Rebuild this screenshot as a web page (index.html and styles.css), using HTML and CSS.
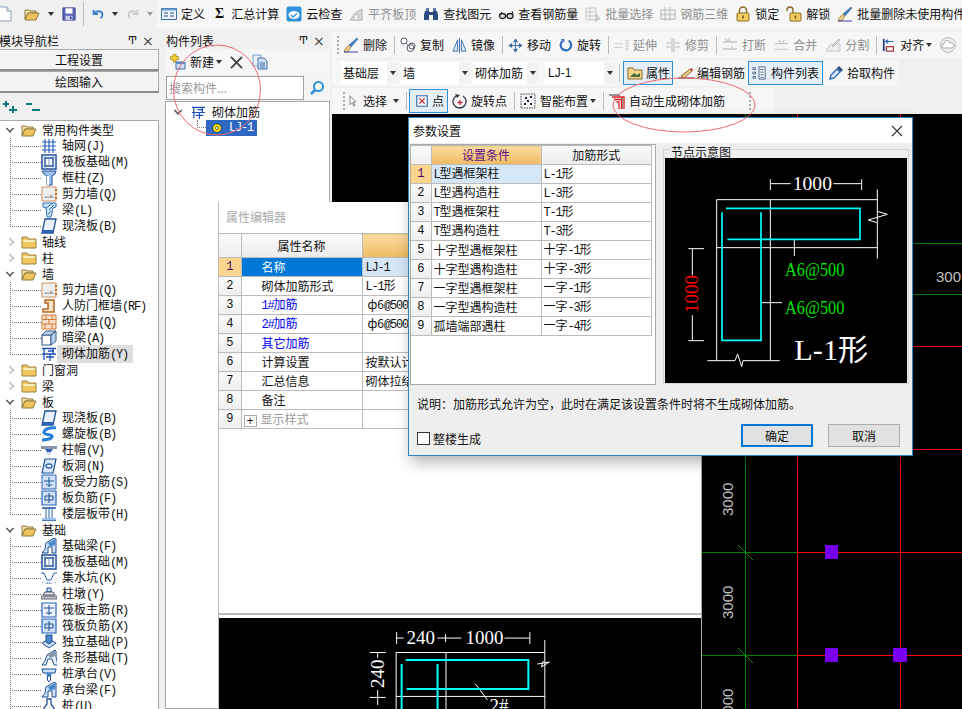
FILE: index.html
```html
<!DOCTYPE html>
<html lang="zh-CN">
<head>
<meta charset="utf-8">
<title>砌体加筋</title>
<link rel="stylesheet" href="styles.css">
</head>
<body>
<svg class="defs" width="0" height="0">
  <symbol id="doc" viewBox="0 0 16 16"><path d="M2 1h8l4 4v10H2z" fill="#fff" stroke="#8aa0b8"/><path d="M10 1v4h4" fill="#dde6f0" stroke="#8aa0b8"/></symbol>
  <symbol id="fopen" viewBox="0 0 16 16"><path d="M1 13V4h4l1 1h6v2H4z" fill="#f5e2a8" stroke="#8f7a3c"/><path d="M1 14l3-7h11l-3 7z" fill="#eec25c" stroke="#8f7a3c"/></symbol>
  <symbol id="fclosed" viewBox="0 0 16 16"><path d="M1 14V3h5l1 2h8v9z" fill="#f0c65e" stroke="#9a8444"/><path d="M2 6h12v2H2z" fill="#fbeab8"/></symbol>
  <symbol id="save" viewBox="0 0 16 16"><path d="M1 1h14v14H1z" fill="#5c62b8" stroke="#3c4488"/><path d="M4 1.500h8v6H4z" fill="#fff"/><path d="M4 10h8v5H4z" fill="#c8cce8"/><path d="M9 11h2v3H9z" fill="#3c4488"/></symbol>
  <symbol id="undo" viewBox="0 0 16 16"><path d="M3 3v5h5M3.500 7.500C6 4 12 4 13 8c.5 2-1 4-2 5" fill="none" stroke="#3f7fc8" stroke-width="2.200"/></symbol>
  <symbol id="redo" viewBox="0 0 16 16"><path d="M13 3v5H8M12.500 7.500C10 4 4 4 3 8c-.5 2 1 4 2 5" fill="none" stroke="#c9cdd0" stroke-width="2.200"/></symbol>
  <symbol id="define" viewBox="0 0 16 16"><path d="M.5 2.500h15v11H.5z" fill="#eef4fb" stroke="#3a6ea8"/><path d="M.5 2.500h15v2H.5z" fill="#6b9bd0"/><path d="M3 7h4M3 10h4M9 7h4M9 10h4" stroke="#234e80"/></symbol>
  <symbol id="cloudchk" viewBox="0 0 16 16"><rect x=".5" y=".5" width="15" height="15" rx="2" fill="#2d93dd"/><ellipse cx="8" cy="9" rx="5.500" ry="4" fill="#fff"/><path d="M5 9l2 2 4-3.500" fill="none" stroke="#2d93dd" stroke-width="1.300"/></symbol>
  <symbol id="alignt" viewBox="0 0 16 16"><path d="M1 14l6-8 7-4v12z" fill="#d5d8d8" stroke="#b0b4b4"/><path d="M5 8h5v6H5z" fill="#eee" stroke="#b8bcbc"/></symbol>
  <symbol id="bino" viewBox="0 0 16 16"><path d="M2 5h4v9H1v-5zM10 5h4l1 4v5h-5zM6 6h4v3H6z" fill="#2a4a80"/><path d="M3 2h3v3H3zM10 2h3v3h-3z" fill="#5c78a8"/></symbol>
  <symbol id="glass" viewBox="0 0 16 16"><path d="M1 9l3-3" stroke="#222" fill="none"/><ellipse cx="4.500" cy="10" rx="3" ry="2.500" fill="#ddd" stroke="#222" stroke-width="1.300"/><ellipse cx="12" cy="10" rx="3" ry="2.500" fill="#ddd" stroke="#222" stroke-width="1.300"/><path d="M7.500 10h1.500M15 8l-1-3" stroke="#222" fill="none"/></symbol>
  <symbol id="batch" viewBox="0 0 16 16"><path d="M1 2h10v12H1zM1 6h10M1 10h10M5 2v12" fill="none" stroke="#c4c8c8"/><path d="M11 8l4 5-3 .5-1 2z" fill="#dcdede" stroke="#b8bcbc"/></symbol>
  <symbol id="steel3d" viewBox="0 0 16 16"><path d="M1 4h14v9H1zM1 8.500h14M5 1v14M10 1v14" fill="none" stroke="#c4c8c8" stroke-width="1.300"/></symbol>
  <symbol id="lock" viewBox="0 0 16 16"><path d="M4.500 7V4.500a3.500 3.500 0 0 1 7 0V7" fill="none" stroke="#8a6c22" stroke-width="1.400"/><rect x="2" y="7" width="12" height="8" rx="1" fill="#f2cc62" stroke="#8a6c22"/><path d="M8 9.500v3" stroke="#6a5218" stroke-width="1.500"/></symbol>
  <symbol id="unlock" viewBox="0 0 16 16"><path d="M1 5V4a3 3 0 0 1 6 0v3" fill="none" stroke="#8a6c22" stroke-width="1.400"/><rect x="4" y="7" width="11" height="8" rx="1" fill="#f2cc62" stroke="#8a6c22"/><path d="M9.500 9.500v3" stroke="#6a5218" stroke-width="1.500"/></symbol>
  <symbol id="brush" viewBox="0 0 16 16"><path d="M14 1l1 1-7 8-2-2z" fill="#3f7fc8" stroke="#234e80" stroke-width=".5"/><path d="M6 8l2 2-3 5-4 0 1-3z" fill="#e8c88a" stroke="#8a6c22" stroke-width=".6"/><path d="M1 15h14" stroke="#3c44a8"/></symbol>
  <symbol id="copyc" viewBox="0 0 16 16"><circle cx="4" cy="4" r="3" fill="#fff" stroke="#556"/><circle cx="10.500" cy="11" r="3.500" fill="#fff" stroke="#556"/><circle cx="12" cy="9" r="3" fill="none" stroke="#556"/><path d="M6 6l2 2" stroke="#556" stroke-dasharray="1 1"/></symbol>
  <symbol id="mirror" viewBox="0 0 16 16"><path d="M6 2L1 14h5zM10 2l5 12h-5z" fill="#dfeaf6" stroke="#3a6ea8"/><path d="M8 0v16" stroke="#3a6ea8"/></symbol>
  <symbol id="move" viewBox="0 0 16 16"><path d="M8 1v14M1 8h14M8 1L6 4h4zM8 15l-2-3h4zM1 8l3-2v4zM15 8l-3-2v4z" fill="#3f6fa8" stroke="#3f6fa8"/></symbol>
  <symbol id="rot" viewBox="0 0 16 16"><path d="M11 3a6 6 0 1 1-7 .5" fill="none" stroke="#2e6cc0" stroke-width="2.500"/><path d="M2 1h4v4z" fill="#2e6cc0"/></symbol>
  <symbol id="ext" viewBox="0 0 16 16"><path d="M1 6h9M1 10h9M13 2v12M15 2v12" stroke="#bbb" fill="none" stroke-dasharray="2 1"/></symbol>
  <symbol id="trim" viewBox="0 0 16 16"><path d="M1 6h5M1 10h5M10 6h5M10 10h5M7 1v14M9 1v14" stroke="#bbb" fill="none"/></symbol>
  <symbol id="brk" viewBox="0 0 16 16"><path d="M1 5h14M1 12h14M7 1v4M10 9v4M3 2l3 2" stroke="#c2c6c6" fill="none" stroke-width="1.300"/></symbol>
  <symbol id="merge" viewBox="0 0 16 16"><path d="M1 6h14M1 12h14M5 2l2 3M11 2L9 5" stroke="#c2c6c6" fill="none" stroke-width="1.300"/></symbol>
  <symbol id="split" viewBox="0 0 16 16"><path d="M1 14l5-7h9v7z" fill="#eee" stroke="#c2c6c6"/><path d="M7 9l7-7 1 1-7 7z" fill="#ddd" stroke="#b8bcbc"/></symbol>
  <symbol id="alignl" viewBox="0 0 16 16"><path d="M2 1v14" stroke="#203c80" stroke-width="2"/><path d="M4 4h9M4 4l3-2M4 4l3 2" stroke="#2a62b8" fill="none" stroke-width="1.300"/><rect x="5" y="10" width="8" height="5" fill="#fff" stroke="#a02030" stroke-width="1.300"/></symbol>
  <symbol id="cloudg" viewBox="0 0 16 16"><circle cx="8" cy="8" r="7.500" fill="#eee" stroke="#bbb"/><path d="M4 11a2 2 0 0 1 0-4 3 3 0 0 1 6-1 2.500 2.500 0 0 1 2 5z" fill="#fff" stroke="#aaa"/></symbol>
  <symbol id="prop" viewBox="0 0 16 16"><path d="M1 3h5l1 2h8v9H1z" fill="#f3d48a" stroke="#8a6c22"/><path d="M3 12l4-4 3 2 3-2v4z" fill="#4a6a3a"/></symbol>
  <symbol id="edit" viewBox="0 0 16 16"><path d="M0 13h16" stroke="#222"/><path d="M3 11l9-7 2 2-8 7z" fill="#f0d080" stroke="#8a6030"/><path d="M12 4l1.500-1 2 2L14 6z" fill="#c04040"/></symbol>
  <symbol id="list" viewBox="0 0 16 16"><path d="M8 1h7v14H8z" fill="#fff" stroke="#3a5a88"/><path d="M9.500 4h4M9.500 7h4M9.500 10h4M9.500 13h4" stroke="#3a5a88"/><path d="M1 2h3v2H1zM1 7h3v2H1zM1 12h3v2H1z" fill="#fff" stroke="#3a5a88"/></symbol>
  <symbol id="pick" viewBox="0 0 16 16"><path d="M2 14l1-4 6-6 3 3-6 6z" fill="#dbe9f8" stroke="#2a62b8" stroke-width="1.300"/><path d="M9 3l2-2 4 4-2 2z" fill="#2a4a80"/></symbol>
  <symbol id="arrow" viewBox="0 0 16 16"><path d="M4 1v12l3-3 2 5 1.500-.8-2-5H12z" fill="#fff" stroke="#667"/></symbol>
  <symbol id="point" viewBox="0 0 16 16"><path d="M2 2h12v12H2z" fill="#eef3fa" stroke="#3a6ea8" stroke-width="1.300"/><path d="M5 5l6 6M11 5l-6 6" stroke="#c02030" stroke-width="1.300"/></symbol>
  <symbol id="rotp" viewBox="0 0 16 16"><path d="M5 2.500a6.500 6.500 0 1 0 6 .5" fill="none" stroke="#334" stroke-width="1.300"/><path d="M3 1l5 1-3 3z" fill="#334"/><path d="M8 7v5M5.500 9.500h5" stroke="#c03040" stroke-width="1.300"/></symbol>
  <symbol id="smart" viewBox="0 0 16 16"><rect x="1" y="1" width="14" height="14" fill="#f4f4f4" stroke="#445" stroke-dasharray="1.500 1"/><path d="M5 4h2v2H5zM10 3h2v2h-2zM4 10h2v2H4zM10 10h2v2h-2zM7 7h2v2H7z" fill="#223"/></symbol>
  <symbol id="auto" viewBox="0 0 16 16"><path d="M0 2h11M13 4v12" stroke="#333" fill="none"/><path d="M3 4h12v12M5 6.500h7.500V16M7.500 9h2.500v7" stroke="#e02020" fill="none" stroke-width="1.300"/></symbol>
  <symbol id="newi" viewBox="0 0 16 16"><path d="M6 8h9v7H6z" fill="#cfe0f4" stroke="#3a6ea8"/><path d="M6 8h9v2H6z" fill="#5f8fc8"/><path d="M3 0h3v2.500h2.500v3H6V8H3V5.500H.5v-3H3z" fill="#f3d030" stroke="#8a7a20" stroke-width=".6"/></symbol>
  <symbol id="copyp" viewBox="0 0 16 16"><path d="M1 1h8v11H1z" fill="#e8f0fa" stroke="#7a9cc8"/><path d="M6 4h6l3 3v8H6z" fill="#cfe0f4" stroke="#3a6ea8"/><path d="M8 9h5M8 11h5M8 13h5" stroke="#3a6ea8"/></symbol>
  <symbol id="search" viewBox="0 0 16 16"><circle cx="9.500" cy="6.500" r="4.500" fill="#fff" stroke="#2e90d8" stroke-width="2"/><path d="M6 10l-4 4" stroke="#2e90d8" stroke-width="2.500"/></symbol>

  <symbol id="t-grid" viewBox="0 0 16 16"><path d="M1 4h14M1 8h14M1 12h14M4 1v14M8 1v14M12 1v14" stroke="#2a62b8" stroke-width="1.200" fill="none"/></symbol>
  <symbol id="t-raft" viewBox="0 0 16 16"><path d="M1 1h14v14H1z" fill="#fff" stroke="#1f4f96" stroke-width="1.500"/><path d="M4 4h8v8H4z" fill="none" stroke="#1f4f96" stroke-width="1.400"/><path d="M1 4h3M12 4h3M1 12h3M12 12h3M4 1v3M12 1v3M4 12v3M12 12v3M8 4v8" stroke="#6f9ad0"/></symbol>
  <symbol id="t-col" viewBox="0 0 16 16"><path d="M1 1h14l-1 3-3 2v9H6V6L3 4z" fill="#9cc0ea" stroke="#1f4f96"/><path d="M6 6h2v9H6z" fill="#fff"/></symbol>
  <symbol id="t-swall" viewBox="0 0 16 16"><path d="M1 1h14v14H1z" fill="#efefef" stroke="#d0905a"/><path d="M3 12l2-2 3 1 2-3 3 4z" fill="#aaa"/><path d="M15 3v2M15 7v2M15 11v2" stroke="#c86a20" stroke-width="2"/></symbol>
  <symbol id="t-beam" viewBox="0 0 16 16"><path d="M2 1h13v4l-3 1-2 9H6L5 6 2 5z" fill="#cfe4f8" stroke="#2a72b8"/><path d="M5 6l7-5M8 8l5-5M7 12l3-3" stroke="#2a72b8" fill="none"/></symbol>
  <symbol id="t-slab" viewBox="0 0 16 16"><path d="M4 1h11l-3 14H1z" fill="#e8f1fb" stroke="#1f4f96" stroke-width="1.300"/><path d="M1 15h11l1-3H2z" fill="#2a62b8"/></symbol>
  <symbol id="t-gate" viewBox="0 0 16 16"><path d="M4 2h9v12H2v-3h5V5H4z" fill="#f6e3c8" stroke="#b5651d" stroke-width="1.500"/></symbol>
  <symbol id="t-brick" viewBox="0 0 16 16"><path d="M1 1h14v14H1z" fill="#fae0c8" stroke="#d07c3c"/><path d="M1 5.500h14M1 10h14M5 1v4.500M11 1v4.500M8 5.500V10M4 10v5M11 10v5" stroke="#d07c3c"/></symbol>
  <symbol id="t-hid" viewBox="0 0 16 16"><path d="M1 5h9v10H1z" fill="#fff" stroke="#3a5a88" stroke-width="1.200"/><path d="M1 5l4-4h10l-5 4zM10 5l5-4v10l-5 4z" fill="#b9d2ee" stroke="#3a5a88"/></symbol>
  <symbol id="t-reb" viewBox="0 0 16 16"><path d="M1 2.500h14M3 2v12M12 2.500V8M1 8h14M7 5h6M9 8v7M5 11h8" stroke="#1f4fb8" stroke-width="1.300" fill="none"/></symbol>
  <symbol id="t-spi" viewBox="0 0 16 16"><path d="M15 2C9 1 4 3 3 6s7 2 8 4-4 4-10 4" fill="none" stroke="#2a80d8" stroke-width="3"/></symbol>
  <symbol id="t-cap" viewBox="0 0 16 16"><path d="M0 4h16v3H0z" fill="#8a96a8"/><path d="M4 7h8l-2 3H6z" fill="#2a62b8"/><path d="M6 10h4v3H6z" fill="#cfd8e4"/></symbol>
  <symbol id="t-hole" viewBox="0 0 16 16"><path d="M4 1h11l-3 14H1z" fill="#dceafa" stroke="#1f4f96" stroke-width="1.200"/><ellipse cx="8" cy="8" rx="3" ry="2" fill="#fff" stroke="#2a62b8" stroke-width="1.300"/></symbol>
  <symbol id="t-force" viewBox="0 0 16 16"><path d="M1 1h14v14H1z" fill="#cfe2f8" stroke="#2a62b8"/><path d="M3 7h10M8 3v10M5 10c2 2 5 2 6 0" stroke="#1f4f96" fill="none"/></symbol>
  <symbol id="t-neg" viewBox="0 0 16 16"><path d="M1 1h14v14H1z" fill="#cfe2f8" stroke="#2a62b8" stroke-width="1.200"/><path d="M4 6h8v4H4zM8 3v10" stroke="#1f4f96" fill="none"/></symbol>
  <symbol id="t-belt" viewBox="0 0 16 16"><path d="M1 2h14M1 14h14" stroke="#1f4f96" stroke-width="1.500"/><path d="M5 2v12M8 2v12M11 2v12" stroke="#2a62b8"/><path d="M1 13h14" stroke="#9cc0ea" stroke-width="2"/></symbol>
  <symbol id="t-fb" viewBox="0 0 16 16"><path d="M1 15l3-4 1-6 8-5 2 1v14h-4V9H7v6z" fill="#cfe4f8" stroke="#1f4f96"/><path d="M7 5l7-4v6l-5 2z" fill="#4a88c8"/></symbol>
  <symbol id="t-pit" viewBox="0 0 16 16"><path d="M0 3h3l3 7h4l3-7h3" fill="none" stroke="#2a62b8"/><path d="M2 9l3 5h6l3-5 -2 4H4z" fill="#9cc0ea"/><path d="M1 12l1 1M6 13h4M14 12l1 1" stroke="#2a62b8" stroke-dasharray="1 1"/></symbol>
  <symbol id="t-pier" viewBox="0 0 16 16"><path d="M6 2h4v4H6z" fill="#cfe0f4" stroke="#1f4f96"/><path d="M4 6h8l2 3H2z" fill="#e8eef6" stroke="#445"/><path d="M0 10h16v3H0z" fill="#b8bec8" stroke="#667"/></symbol>
  <symbol id="t-main" viewBox="0 0 16 16"><path d="M1 1h14v14H1z" fill="#eaf2fb" stroke="#2a62b8" stroke-width="1.200"/><path d="M3 6h10M8 3v10M5 11h6" stroke="#1f4f96" fill="none"/></symbol>
  <symbol id="t-iso" viewBox="0 0 16 16"><path d="M1 9l7-4 7 4-7 5z" fill="#cfe2f8" stroke="#1f4f96"/><path d="M5 1h6v7l-3 2-3-2z" fill="#4a88c8" stroke="#1f4f96"/></symbol>
  <symbol id="t-strip" viewBox="0 0 16 16"><path d="M1 15l3-4 2-6 8-5 1 1v6l2 8h-4l-2-6H7l-2 6z" fill="#e8f1fb" stroke="#1f4f96"/><path d="M7 5l7-4v5l-5 2z" fill="#8a96a8"/></symbol>
  <symbol id="t-cb" viewBox="0 0 16 16"><path d="M1 3h14l-1 4H2z" fill="#cfe2f8" stroke="#1f4f96"/><path d="M5 7h6l-1 3H6z" fill="#4a88c8"/><path d="M6.500 10h3v4l-1.500 2-1.500-2z" fill="#fff" stroke="#1f4f96"/></symbol>
  <symbol id="t-pile" viewBox="0 0 16 16"><path d="M6 1h4v5l3 4v3H3v-3l3-4z" fill="#fff" stroke="#1f4f96" stroke-width="1.300"/><path d="M3 13h10v2H3z" fill="#4a88c8"/></symbol>
  <symbol id="t-gear" viewBox="0 0 16 16"><circle cx="8" cy="8" r="5.500" fill="#ffe800" stroke="#222" stroke-dasharray="2 1"/><circle cx="8" cy="8" r="2" fill="#fff" stroke="#444"/></symbol>
</svg>

<div class="app">
  <header class="topbar">
    <div class="qa">
      <svg class="ic doccut"><use href="#doc"/></svg>
      <svg class="ic ic18"><use href="#fopen"/></svg><span class="caret"></span>
      <svg class="ic ic14"><use href="#save"/></svg>
      <span class="vbar"></span>
      <svg class="ic ic14"><use href="#undo"/></svg><span class="caret"></span>
      <svg class="ic ic14"><use href="#redo"/></svg><span class="caret faint"></span>
    </div>
    <div class="mainbar">
      <div class="ti"><svg class="ic"><use href="#define"/></svg>定义</div>
      <div class="ti sigma"><span class="sig">Σ</span>汇总计算</div>
      <div class="ti"><svg class="ic"><use href="#cloudchk"/></svg>云检查</div>
      <div class="ti off"><svg class="ic ic15"><use href="#alignt"/></svg>平齐板顶</div>
      <div class="ti"><svg class="ic"><use href="#bino"/></svg>查找图元</div>
      <div class="ti"><svg class="ic"><use href="#glass"/></svg>查看钢筋量</div>
      <div class="ti off"><svg class="ic"><use href="#batch"/></svg>批量选择</div>
      <div class="ti off"><svg class="ic"><use href="#steel3d"/></svg>钢筋三维</div>
      <div class="ti"><svg class="ic"><use href="#lock"/></svg>锁定</div>
      <div class="ti"><svg class="ic"><use href="#unlock"/></svg>解锁</div>
      <div class="ti"><svg class="ic"><use href="#brush"/></svg>批量删除未使用构件</div>
    </div>
  </header>

  <div class="main">
    <aside class="nav">
      <div class="panehead navhead"><span class="title cutleft">模块导航栏</span><span class="pin">Ͳ</span><span class="closex">×</span></div>
      <button class="navbtn">工程设置</button>
      <button class="navbtn">绘图输入</button>
      <div class="navtools">
        <svg class="pm" viewBox="0 0 16 12"><path d="M1 3h6M4 0v6M7 9h8M11 5v7" stroke="#0a7a7a" stroke-width="2"/></svg>
        <svg class="pm" viewBox="0 0 16 12"><path d="M1 3h6M7 9h8" stroke="#0a7a7a" stroke-width="2"/></svg>
      </div>
      <div class="tree">
        <div class="node"><span class="tw open"></span><svg class="ic"><use href="#fopen"/></svg><span class="lbl">常用构件类型</span></div>
        <div class="kid"><span class="conn"></span><svg class="ic"><use href="#t-grid"/></svg><span class="lbl">轴网<span class="la">(J)</span></span></div>
        <div class="kid"><span class="conn"></span><svg class="ic"><use href="#t-raft"/></svg><span class="lbl">筏板基础<span class="la">(M)</span></span></div>
        <div class="kid"><span class="conn"></span><svg class="ic"><use href="#t-col"/></svg><span class="lbl">框柱<span class="la">(Z)</span></span></div>
        <div class="kid"><span class="conn"></span><svg class="ic"><use href="#t-swall"/></svg><span class="lbl">剪力墙<span class="la">(Q)</span></span></div>
        <div class="kid"><span class="conn"></span><svg class="ic"><use href="#t-beam"/></svg><span class="lbl">梁<span class="la">(L)</span></span></div>
        <div class="kid"><span class="conn end"></span><svg class="ic"><use href="#t-slab"/></svg><span class="lbl">现浇板<span class="la">(B)</span></span></div>
        <div class="node"><span class="tw"></span><svg class="ic"><use href="#fclosed"/></svg><span class="lbl">轴线</span></div>
        <div class="node"><span class="tw"></span><svg class="ic"><use href="#fclosed"/></svg><span class="lbl">柱</span></div>
        <div class="node"><span class="tw open"></span><svg class="ic"><use href="#fopen"/></svg><span class="lbl">墙</span></div>
        <div class="kid"><span class="conn"></span><svg class="ic"><use href="#t-swall"/></svg><span class="lbl">剪力墙<span class="la">(Q)</span></span></div>
        <div class="kid"><span class="conn"></span><svg class="ic"><use href="#t-gate"/></svg><span class="lbl">人防门框墙<span class="la">(RF)</span></span></div>
        <div class="kid"><span class="conn"></span><svg class="ic"><use href="#t-brick"/></svg><span class="lbl">砌体墙<span class="la">(Q)</span></span></div>
        <div class="kid"><span class="conn"></span><svg class="ic"><use href="#t-hid"/></svg><span class="lbl">暗梁<span class="la">(A)</span></span></div>
        <div class="kid"><span class="conn end"></span><svg class="ic"><use href="#t-reb"/></svg><span class="lbl hot">砌体加筋<span class="la">(Y)</span></span></div>
        <div class="node"><span class="tw"></span><svg class="ic"><use href="#fclosed"/></svg><span class="lbl">门窗洞</span></div>
        <div class="node"><span class="tw"></span><svg class="ic"><use href="#fclosed"/></svg><span class="lbl">梁</span></div>
        <div class="node"><span class="tw open"></span><svg class="ic"><use href="#fopen"/></svg><span class="lbl">板</span></div>
        <div class="kid"><span class="conn"></span><svg class="ic"><use href="#t-slab"/></svg><span class="lbl">现浇板<span class="la">(B)</span></span></div>
        <div class="kid"><span class="conn"></span><svg class="ic"><use href="#t-spi"/></svg><span class="lbl">螺旋板<span class="la">(B)</span></span></div>
        <div class="kid"><span class="conn"></span><svg class="ic"><use href="#t-cap"/></svg><span class="lbl">柱帽<span class="la">(V)</span></span></div>
        <div class="kid"><span class="conn"></span><svg class="ic"><use href="#t-hole"/></svg><span class="lbl">板洞<span class="la">(N)</span></span></div>
        <div class="kid"><span class="conn"></span><svg class="ic"><use href="#t-force"/></svg><span class="lbl">板受力筋<span class="la">(S)</span></span></div>
        <div class="kid"><span class="conn"></span><svg class="ic"><use href="#t-neg"/></svg><span class="lbl">板负筋<span class="la">(F)</span></span></div>
        <div class="kid"><span class="conn end"></span><svg class="ic"><use href="#t-belt"/></svg><span class="lbl">楼层板带<span class="la">(H)</span></span></div>
        <div class="node"><span class="tw open"></span><svg class="ic"><use href="#fopen"/></svg><span class="lbl">基础</span></div>
        <div class="kid"><span class="conn"></span><svg class="ic"><use href="#t-fb"/></svg><span class="lbl">基础梁<span class="la">(F)</span></span></div>
        <div class="kid"><span class="conn"></span><svg class="ic"><use href="#t-raft"/></svg><span class="lbl">筏板基础<span class="la">(M)</span></span></div>
        <div class="kid"><span class="conn"></span><svg class="ic"><use href="#t-pit"/></svg><span class="lbl">集水坑<span class="la">(K)</span></span></div>
        <div class="kid"><span class="conn"></span><svg class="ic"><use href="#t-pier"/></svg><span class="lbl">柱墩<span class="la">(Y)</span></span></div>
        <div class="kid"><span class="conn"></span><svg class="ic"><use href="#t-main"/></svg><span class="lbl">筏板主筋<span class="la">(R)</span></span></div>
        <div class="kid"><span class="conn"></span><svg class="ic"><use href="#t-neg"/></svg><span class="lbl">筏板负筋<span class="la">(X)</span></span></div>
        <div class="kid"><span class="conn"></span><svg class="ic"><use href="#t-iso"/></svg><span class="lbl">独立基础<span class="la">(P)</span></span></div>
        <div class="kid"><span class="conn"></span><svg class="ic"><use href="#t-strip"/></svg><span class="lbl">条形基础<span class="la">(T)</span></span></div>
        <div class="kid"><span class="conn"></span><svg class="ic"><use href="#t-cb"/></svg><span class="lbl">桩承台<span class="la">(V)</span></span></div>
        <div class="kid"><span class="conn"></span><svg class="ic"><use href="#t-fb"/></svg><span class="lbl">承台梁<span class="la">(F)</span></span></div>
        <div class="kid"><span class="conn"></span><svg class="ic"><use href="#t-pile"/></svg><span class="lbl">桩<span class="la">(U)</span></span></div>
      </div>
    </aside>

    <aside class="list">
      <div class="panehead"><span class="title">构件列表</span><span class="pin">Ͳ</span><span class="closex">×</span></div>
      <div class="listtools">
        <svg class="ic"><use href="#newi"/></svg><span class="newtxt">新建</span><span class="caret small"></span>
        <svg class="bigx" viewBox="0 0 14 14"><path d="M1 1l12 12M13 1L1 13" stroke="#444" stroke-width="2"/></svg>
        <svg class="ic"><use href="#copyp"/></svg>
      </div>
      <div class="searchrow">
        <div class="searchbox">搜索构件...</div>
        <div class="searchbtn"><svg class="ic"><use href="#search"/></svg></div>
      </div>
      <div class="listtree">
        <div class="rootnode"><span class="tw open"></span><svg class="ic ic15"><use href="#t-reb"/></svg><span>砌体加筋</span></div>
        <div class="leaf"><span class="leafconn"></span><span class="leafsel"><svg class="ic ic12"><use href="#t-gear"/></svg><span class="leaftxt">LJ-1</span></span></div>
      </div>
    </aside>

    <section class="work">
      <div class="bar bara">
        <span class="grip"></span>
        <div class="ti"><svg class="ic"><use href="#brush"/></svg>删除</div>
        <span class="sep"></span>
        <div class="ti"><svg class="ic"><use href="#copyc"/></svg>复制</div>
        <div class="ti"><svg class="ic ic15"><use href="#mirror"/></svg>镜像</div>
        <span class="sep"></span>
        <div class="ti"><svg class="ic ic15"><use href="#move"/></svg>移动</div>
        <div class="ti"><svg class="ic ic14"><use href="#rot"/></svg>旋转</div>
        <span class="sep"></span>
        <div class="ti off"><svg class="ic ic15"><use href="#ext"/></svg>延伸</div>
        <div class="ti off"><svg class="ic"><use href="#trim"/></svg>修剪</div>
        <span class="sep"></span>
        <div class="ti off"><svg class="ic"><use href="#brk"/></svg>打断</div>
        <div class="ti off"><svg class="ic ic15"><use href="#merge"/></svg>合并</div>
        <div class="ti off"><svg class="ic"><use href="#split"/></svg>分割</div>
        <span class="sep"></span>
        <div class="ti"><svg class="ic ic14"><use href="#alignl"/></svg>对齐<span class="caret small"></span></div>
        <svg class="ic"><use href="#cloudg"/></svg>
      </div>
      <div class="bar barb">
        <div class="sel w57"><span class="seltxt">基础层</span><span class="selbtn"></span></div>
        <div class="sel w69"><span class="seltxt">墙</span><span class="selbtn"></span></div>
        <div class="sel w65"><span class="seltxt">砌体加筋</span><span class="selbtn"></span></div>
        <div class="sel w70"><span class="seltxt lj">LJ-1</span><span class="selbtn"></span></div>
        <span class="sep narrow"></span>
        <div class="ti on propbtn"><svg class="ic"><use href="#prop"/></svg>属性</div>
        <div class="ti"><svg class="ic"><use href="#edit"/></svg>编辑钢筋</div>
        <div class="ti on listbtn"><svg class="ic ic14"><use href="#list"/></svg>构件列表</div>
        <div class="ti"><svg class="ic"><use href="#pick"/></svg>拾取构件</div>
      </div>
      <div class="bar barc">
        <span class="grip"></span>
        <div class="ti wide"><svg class="ic ic12"><use href="#arrow"/></svg>选择<span class="caret"></span></div>
        <span class="sep"></span>
        <div class="ti on ptbtn"><svg class="ic ic14"><use href="#point"/></svg>点</div>
        <div class="ti rotpt"><svg class="ic"><use href="#rotp"/></svg>旋转点</div>
        <span class="sep"></span>
        <div class="ti"><svg class="ic"><use href="#smart"/></svg>智能布置<span class="caret small"></span></div>
        <span class="sep"></span>
        <div class="ti"><svg class="ic"><use href="#auto"/></svg>自动生成砌体加筋</div>
        <span class="grip late"></span>
      </div>
      <div class="canvas">
        <svg class="cad" viewBox="332 114 630 595">
          <g fill="none" stroke-width="1">
            <path d="M702 243.500H962M702 294.500H962M702 552.500H797M702 655.500H797M745.500 114V709" stroke="#008000"/>
            <path d="M797.500 114V709M900.500 114V709M702 346.500H962M702 449.500H962M797 552.500H962M797 655.500H962" stroke="#ff0000"/>
            <path d="M738 545l15 15M738 648l15 15" stroke="#0a8a0a"/>
          </g>
          <g fill="#7800f0"><rect x="825" y="545" width="13" height="14"/><rect x="825" y="648" width="13" height="14"/><rect x="893" y="648" width="14" height="14"/></g>
          <g class="cadtxt">
            <text x="936" y="282">300</text>
            <text transform="translate(733 516) rotate(-90)">3000</text>
            <text transform="translate(733 619) rotate(-90)">3000</text>
            <text transform="translate(733 722) rotate(-90)">3000</text>
          </g>
        </svg>
      </div>
    </section>
  </div>

  <section class="propwin">
    <div class="wintitle faded">属性编辑器</div>
    <table class="grid ptable">
      <tr class="hd"><th class="no"></th><th>属性名称</th><th class="orange"></th></tr>
      <tr><td class="no cur">1</td><td class="sel-name">名称</td><td class="val cursor-val"><span class="la2">LJ-1</span></td></tr>
      <tr><td class="no">2</td><td class="nm">砌体加筋形式</td><td class="val"><span class="la2">L-1</span>形</td></tr>
      <tr><td class="no">3</td><td class="nm blue"><span class="la2">1#</span>加筋</td><td class="val ind">ф6<span class="la2">@500</span></td></tr>
      <tr><td class="no">4</td><td class="nm blue"><span class="la2">2#</span>加筋</td><td class="val ind">ф6<span class="la2">@500</span></td></tr>
      <tr><td class="no">5</td><td class="nm blue">其它加筋</td><td class="val"></td></tr>
      <tr><td class="no">6</td><td class="nm">计算设置</td><td class="val">按默认计算设置</td></tr>
      <tr><td class="no">7</td><td class="nm">汇总信息</td><td class="val">砌体拉结筋</td></tr>
      <tr><td class="no">8</td><td class="nm">备注</td><td class="val"></td></tr>
      <tr><td class="no">9</td><td class="nm grey"><span class="plus">+</span>显示样式</td><td class="val"></td></tr>
    </table>
    <div class="propfill"></div>
    <svg class="preview" viewBox="219 618 483 91">
      <g fill="none" stroke="#fff" stroke-width="1">
        <path d="M396.500 652.500H545.500M396.500 696.500H545.500M396.500 652V709M446.500 652V709M545.500 640V709"/>
        <path d="M397 632v12M397 638h7M438 638h24M446 634v8M505 638h25M530.500 632v12"/>
        <path d="M370 652.500h16M378 652v6M378 690v15M370 697.500h16"/>
        <path d="M476 684l12 16M538 664l12 -2 -8 5 2 -6"/>
      </g>
      <g fill="none" stroke="#00ffff" stroke-width="2">
        <path d="M406 660H529V689H407M402 664V709M438 664V709"/>
      </g>
      <g class="prevtxt">
        <text x="407" y="644">240</text>
        <text x="466" y="644">1000</text>
        <text transform="translate(384 688) rotate(-90)">240</text>
        <text x="490" y="712">2#</text>
      </g>
    </svg>
  </section>

  <section class="dialog">
    <div class="dlgtitle"><span>参数设置</span><svg class="dlgx" viewBox="0 0 12 12"><path d="M1 1l10 10M11 1L1 11" stroke="#333" stroke-width="1.100"/></svg></div>
    <div class="dlgbody">
      <div class="dlgtop">
        <div class="tablebox">
          <table class="grid dtable">
            <tr class="hd"><th class="no"></th><th class="orange purple">设置条件</th><th>加筋形式</th></tr>
            <tr><td class="no cur">1</td><td class="curcell"><span class="la2">L</span>型遇框架柱</td><td><span class="la2">L-1</span>形</td></tr>
            <tr><td class="no">2</td><td><span class="la2">L</span>型遇构造柱</td><td><span class="la2">L-3</span>形</td></tr>
            <tr><td class="no">3</td><td><span class="la2">T</span>型遇框架柱</td><td><span class="la2">T-1</span>形</td></tr>
            <tr><td class="no">4</td><td><span class="la2">T</span>型遇构造柱</td><td><span class="la2">T-3</span>形</td></tr>
            <tr><td class="no">5</td><td>十字型遇框架柱</td><td>十字<span class="la2">-1</span>形</td></tr>
            <tr><td class="no">6</td><td>十字型遇构造柱</td><td>十字<span class="la2">-3</span>形</td></tr>
            <tr><td class="no">7</td><td>一字型遇框架柱</td><td>一字<span class="la2">-1</span>形</td></tr>
            <tr><td class="no">8</td><td>一字型遇构造柱</td><td>一字<span class="la2">-3</span>形</td></tr>
            <tr><td class="no">9</td><td>孤墙端部遇柱</td><td>一字<span class="la2">-4</span>形</td></tr>
          </table>
        </div>
        <div class="group">
          <span class="legend">节点示意图</span>
          <svg class="node-pic" viewBox="45 128 726 675">
            <rect x="45" y="128" width="726" height="675" fill="#000"/>
            <g fill="none" stroke="#fff" stroke-width="3">
              <path d="M200 253H682M200 397H682M200 253V736M361 253V736M682 222V430M172 736H255l8-20 12 38 4-18H389M433 372V422"/>
              <path d="M361 192V224M635 192V224M361 205H422M550 205H635"/>
              <path d="M115 400H162M115 676H162M127 400V480M127 600V676"/>
              <path d="M336 562H396"/>
              <path d="M682 288l30 9-57 17 25 8"/>
            </g>
            <g fill="none" stroke="#00ffff" stroke-width="5">
              <path d="M228 279H630V372H232"/>
              <path d="M216 291V675H333V291"/>
            </g>
            <text class="pic w" x="428" y="224" textLength="118" lengthAdjust="spacingAndGlyphs">1000</text>
            <text class="pic r" transform="translate(145 593) rotate(-90)" textLength="114" lengthAdjust="spacingAndGlyphs">1000</text>
            <text class="pic g" x="405" y="483" textLength="178" lengthAdjust="spacingAndGlyphs">A6@500</text>
            <text class="pic g" x="405" y="595" textLength="178" lengthAdjust="spacingAndGlyphs">A6@500</text>
            <text class="pic big" x="433" y="735" textLength="222" lengthAdjust="spacingAndGlyphs">L-1形</text>
          </svg>
        </div>
      </div>
      <p class="note">说明：加筋形式允许为空，此时在满足该设置条件时将不生成砌体加筋。</p>
      <div class="dlgfoot">
        <label class="chk"><span class="box"></span>整楼生成</label>
        <button class="dbtn primary">确定</button>
        <button class="dbtn">取消</button>
      </div>
    </div>
  </section>

  <svg class="marks" viewBox="0 0 962 709">
    <ellipse cx="217" cy="90" rx="43.500" ry="45"/>
    <ellipse cx="684" cy="105" rx="71" ry="27"/>
  </svg>
</div>
</body>
</html>
```

FILE: styles.css
```css
* { box-sizing: border-box; }
html, body { margin: 0; padding: 0; }
body {
  width: 962px; height: 709px; overflow: hidden; background: #f0f0f0; color: #111;
  font: 12px/16px "Noto Sans CJK SC", sans-serif;
}
.defs { position: absolute; }
.app { position: relative; width: 962px; height: 709px; overflow: hidden; }

.ic { width: 16px; height: 16px; flex: none; display: block; }
.ic18 { width: 18px; }
.ic15 { width: 15px; height: 15px; }
.ic14 { width: 14px; height: 14px; }
.ic12 { width: 12px; height: 12px; }
.la, .la2 { font-family: "Liberation Mono", monospace; font-size: 12px; letter-spacing: -1.2px; }
.caret { width: 0; height: 0; border: 3px solid transparent; border-top: 4px solid #333; border-bottom: 0; flex: none; }
.caret.faint { border-top-color: #999; }
.caret.small { margin-left: 2px; }
.ti .caret.small { margin-left: -2px; }

/* top bar */
.topbar { display: flex; height: 28px; align-items: center; white-space: nowrap; }
.qa { display: flex; align-items: center; width: 157px; height: 28px; flex: none; }
.doccut { margin-left: -3px; }
.qa .ic18 { margin-left: 10px; }
.qa .caret { margin-left: 7px; }
.qa .ic14 { margin-left: 9px; }
.qa .caret + .ic14 { margin-left: 8px; }
.qa .ic14 + .vbar { margin-left: 7px; }
.vbar { width: 1px; height: 24px; background: #bbb; }
.qa .vbar + .ic14 { margin-left: 7px; }
.qa .ic14 + .caret { margin-left: 7px; }
.mainbar { display: flex; align-items: center; gap: 7px; padding-left: 4px; flex: 1; height: 28px; background: #f6f6f6; overflow: hidden; }
.ti { display: flex; align-items: center; gap: 4px; white-space: nowrap; flex: none; }
.off { color: #8f8f8f; }
.sigma { margin-left: 3px; gap: 7px; }
.sig { font: bold 14px "Liberation Serif", serif; }

.main { display: flex; height: 681px; }

/* left nav */
.nav { width: 159px; flex: none; display: flex; flex-direction: column; padding-top: 4px; }
.panehead { height: 17px; flex: none; display: flex; align-items: center; }
.title { flex: 1; }
.cutleft { margin-left: -1px; }
.pin { width: 19px; text-align: center; font: 11px "DejaVu Sans", sans-serif; color: #222; }
.closex { width: 14px; font: 14px "DejaVu Sans", sans-serif; color: #444; margin-right: 3px; }
.navbtn {
  height: 22px; flex: none; width: 159px; padding: 0; text-align: center; background: #f3f3f3;
  border: 1px solid #aaa; border-left: 0; border-bottom: 2px solid #8d8d8d;
  font: 12px/16px "Noto Sans CJK SC", sans-serif; color: #111;
}
.navtools { height: 27px; flex: none; display: flex; align-items: center; gap: 7px; padding-left: 2px; }
.pm { width: 16px; height: 12px; }
.tree { flex: 1; background: #fff; border: 1px solid #a8a8a8; border-left: 0; border-bottom: 0; padding-top: 1px; }
.node, .kid { height: 16px; display: flex; align-items: center; white-space: nowrap; }
.tw { width: 8px; height: 8px; margin: 0 7px 0 6px; flex: none; border-right: 2px solid #bdbdbd; border-top: 2px solid #bdbdbd; transform: scale(.75) rotate(45deg); }
.tw.open { border-color: #555; transform: scale(.75) translateY(-2px) rotate(135deg); }
.node .lbl { margin-left: 5px; }
.kid .lbl { margin-left: 0; padding: 0 5px; }
.conn {
  width: 31px; height: 16px; margin-left: 10px; flex: none;
  background:
    repeating-linear-gradient(to right, #777 0 1px, transparent 1px 2px) 0 8px / 100% 1px no-repeat,
    repeating-linear-gradient(to bottom, #777 0 1px, transparent 1px 2px) 0 0 / 1px 100% no-repeat;
}
.conn.end {
  background:
    repeating-linear-gradient(to right, #777 0 1px, transparent 1px 2px) 0 8px / 100% 1px no-repeat,
    repeating-linear-gradient(to bottom, #777 0 1px, transparent 1px 2px) 0 0 / 1px 9px no-repeat;
}
.hot { background: #dedede; }

/* component list */
.list { width: 165px; margin-left: 6px; flex: none; display: flex; flex-direction: column; padding-top: 4px; }
.list .title { margin-left: 1px; }
.listtools { height: 26px; flex: none; display: flex; align-items: center; padding-left: 5px; background: #f6f6f6; margin-right: 1px; }
.newtxt { margin-left: 4px; }
.bigx { width: 13px; height: 13px; margin: 0 9px 0 8px; flex: none; }
.searchrow { height: 25px; flex: none; display: flex; margin-top: 1px; }
.searchbox { width: 138px; height: 24px; margin-left: 1px; background: #fff; border: 1px solid #a0a0a0; padding: 3px 2px; color: #999; }
.searchbtn { width: 26px; height: 24px; display: flex; align-items: center; justify-content: center; background: #f4f4f4; }
.listtree { flex: 1; background: #fff; border: 1px solid #a8a8a8; padding-top: 2px; }
.rootnode { height: 16px; display: flex; align-items: center; padding-left: 2px; }
.rootnode .ic { margin: 0 6px 0 2px; }
.leaf { height: 16px; display: flex; }
.leafconn { width: 9px; height: 8px; margin-left: 31px; flex: none; border-left: 1px dotted #777; border-bottom: 1px dotted #777; }
.leafsel { display: flex; align-items: center; width: 51px; height: 16px; padding-left: 5px; background: #2f68c2; color: #fff; }
.leaftxt { margin-left: 6px; font-family: "Liberation Mono", monospace; font-size: 12px; letter-spacing: -1.2px; }

/* right work area */
.work { width: 630px; margin-left: 2px; flex: none; display: flex; flex-direction: column; padding-top: 4px; }
.bar { display: flex; align-items: center; height: 26px; flex: none; background: #f6f6f6; gap: 8px; white-space: nowrap; }
.bara { width: 630px; padding-left: 5px; overflow: hidden; }
.barb { width: 567px; margin-top: 2px; padding-left: 9px; gap: 3px; }
.barc { width: 443px; margin-top: 2px; padding-left: 11px; }
.grip { width: 2px; height: 18px; flex: none; margin-right: -4px;
  background: repeating-linear-gradient(to bottom, #aaa 0 2px, transparent 2px 4px); }
.barc > .grip { margin-right: -6px; }
.barc > .grip.late { margin: 0 0 0 16px; }
.sep { width: 1px; height: 18px; flex: none; background: #bbb; margin: 0 -3px 0 -1px; }
.sep.narrow { margin: 0 0 0 1px; }
.sel { display: flex; height: 22px; flex: none; }
.w57 { width: 57px; }
.w69 { width: 69px; }
.w65 { width: 65px; }
.w70 { width: 70px; margin-left: 4px; }
.seltxt { flex: 1; background: #fff; padding: 3px 2px; overflow: hidden; }
.seltxt.lj { font-family: "Liberation Sans", sans-serif; padding-left: 3px; }
.selbtn { width: 11px; background: #f2f2f2; }
.selbtn::after { content: ""; display: block; width: 0; height: 0; margin: 9px auto 0; border: 3px solid transparent; border-top: 4px solid #333; border-bottom: 0; }
.on { border: 1px solid #2e8fdb; background: #e4eef8; height: 24px; }
.barb .ti { margin-left: 2px; gap: 3px; }
.barb .propbtn { margin-left: 0; padding: 0 2px 0 3px; }
.barb .listbtn { margin-left: 0; padding: 0 3px; gap: 5px; }
.wide { gap: 4px; }
.wide .caret { margin-left: 2px; }
.barc .ptbtn { margin-left: -3px; padding: 0 3px 0 5px; gap: 3px; }
.barc .rotpt { margin-left: -4px; gap: 3px; }
.canvas { flex: 1; background: #000; }
.cad { display: block; width: 630px; height: 595px; }
.cadtxt text { font: 15px "Liberation Sans", sans-serif; fill: #c0c0c0; }

/* property editor */
.propwin {
  position: absolute; left: 218px; top: 202px; width: 484px; height: 507px;
  background: #fff; border-left: 1px solid #bbb; border-right: 1px solid #aaa;
  display: flex; flex-direction: column;
}
.wintitle { height: 31px; flex: none; padding: 7px 7px; }
.faded { color: #aaa; }
.grid { border-collapse: collapse; table-layout: fixed; background: #fff; }
.grid td, .grid th { height: 19px; padding: 0 3px; border: 1px solid #bcbcbc; font-weight: 400; white-space: nowrap; overflow: hidden; line-height: 16px; }
.grid th { text-align: center; background: linear-gradient(#fafafa, #ececec); }
.grid .no { text-align: center; background: linear-gradient(#fafafa, #eeeeee); font-family: "Liberation Mono", monospace; padding: 0; }
.grid .orange { background: linear-gradient(#fbdc9f, #eebb62); }
.grid .cur { background: #fbd48e; color: #4a0a6a; }
.purple { color: #5b0d86; }
.curcell { background: #d5e7f7; }
.ptable { width: 340px; flex: none; border-top: 1px solid #bcbcbc; margin-top: 0; }
.ptable td:first-child, .ptable th:first-child { width: 22px; border-left: 0; }
.ptable th:nth-child(2) { width: 121px; }
.ptable .hd th { height: 24px; }
.ptable .nm { padding-left: 20px; }
.sel-name { background: #0078d7; color: #fff; padding-left: 20px !important; }
.cursor-val { background: #d5e7f7; }
.blue { color: #0000f0; }
.grey { color: #999; }
.plus { display: inline-block; width: 13px; height: 12px; margin: 0 4px 0 -18px; border: 1px solid #aaa; color: #111; font: 12px/10px "Liberation Sans", sans-serif; text-align: center; vertical-align: -1px; }
.ind { padding-left: 5px !important; }
.propfill { flex: 1; border-bottom: 2px solid #b8b8b8; }
.preview { display: block; flex: none; width: 482px; height: 91px; margin-top: 3px; background: #000; margin-left: 0; }
.prevtxt text { font: 19px "Liberation Serif", serif; fill: #fff; }

/* dialog */
.dialog {
  position: absolute; left: 408px; top: 117px; width: 505px; height: 339px;
  border: 1px solid #2b84c6; background: #eee; box-shadow: 3px 6px 14px rgba(0, 0, 0, .3);
  display: flex; flex-direction: column;
}
.dlgtitle { height: 25px; flex: none; background: #fff; display: flex; align-items: center; justify-content: space-between; padding: 0 9px 0 4px; }
.dlgx { width: 12px; height: 12px; }
.dlgbody { flex: 1; display: flex; flex-direction: column; padding: 1px 0 0 1px; }
.dlgtop { display: flex; gap: 7px; height: 241px; flex: none; }
.tablebox { width: 246px; height: 241px; background: #fff; border: 1px solid #aaa; padding: 0 3px 0 0; }
.dtable { width: 241px; }
.dtable .no { width: 20px; border-left: 0; }
.dtable th:nth-child(2) { width: 110px; }
.dtable .hd th { height: 19px; }
.dtable td:not(.no) { padding-left: 2px; }
.group { position: relative; width: 246px; height: 235px; margin-top: 5px; border: 1px solid #d4d4d4; padding: 8px 1px 0; }
.legend { position: absolute; left: 6px; top: -5px; background: #eee; padding: 0 1px; line-height: 13px; }
.node-pic { display: block; width: 242px; height: 225px; }
.pic { font-family: "Liberation Serif", "Noto Sans CJK SC", serif; }
.w { font-size: 58px; fill: #fff; }
.r { font-size: 58px; fill: #f00; }
.g { font-size: 58px; fill: #00e000; }
.big { font-size: 88px; fill: #fff; }
.note { margin: 11px 0 0 7px; height: 16px; flex: none; white-space: nowrap; }
.dlgfoot { display: flex; align-items: center; margin-top: 12px; padding: 0 12px 0 7px; gap: 15px; }
.chk { display: flex; align-items: center; margin-right: auto; gap: 3px; padding-top: 6px; }
.box { width: 13px; height: 13px; background: #fff; border: 1px solid #333; }
.dbtn { width: 72px; height: 23px; padding: 0; background: #e1e1e1; border: 1px solid #adadad; font: 12px/16px "Noto Sans CJK SC", sans-serif; color: #111; }
.primary { border: 2px solid #0078d7; }

.marks { position: absolute; left: 0; top: 0; width: 962px; height: 709px; pointer-events: none; }
.marks ellipse { fill: none; stroke: #ee6a70; stroke-width: 1; }
```
